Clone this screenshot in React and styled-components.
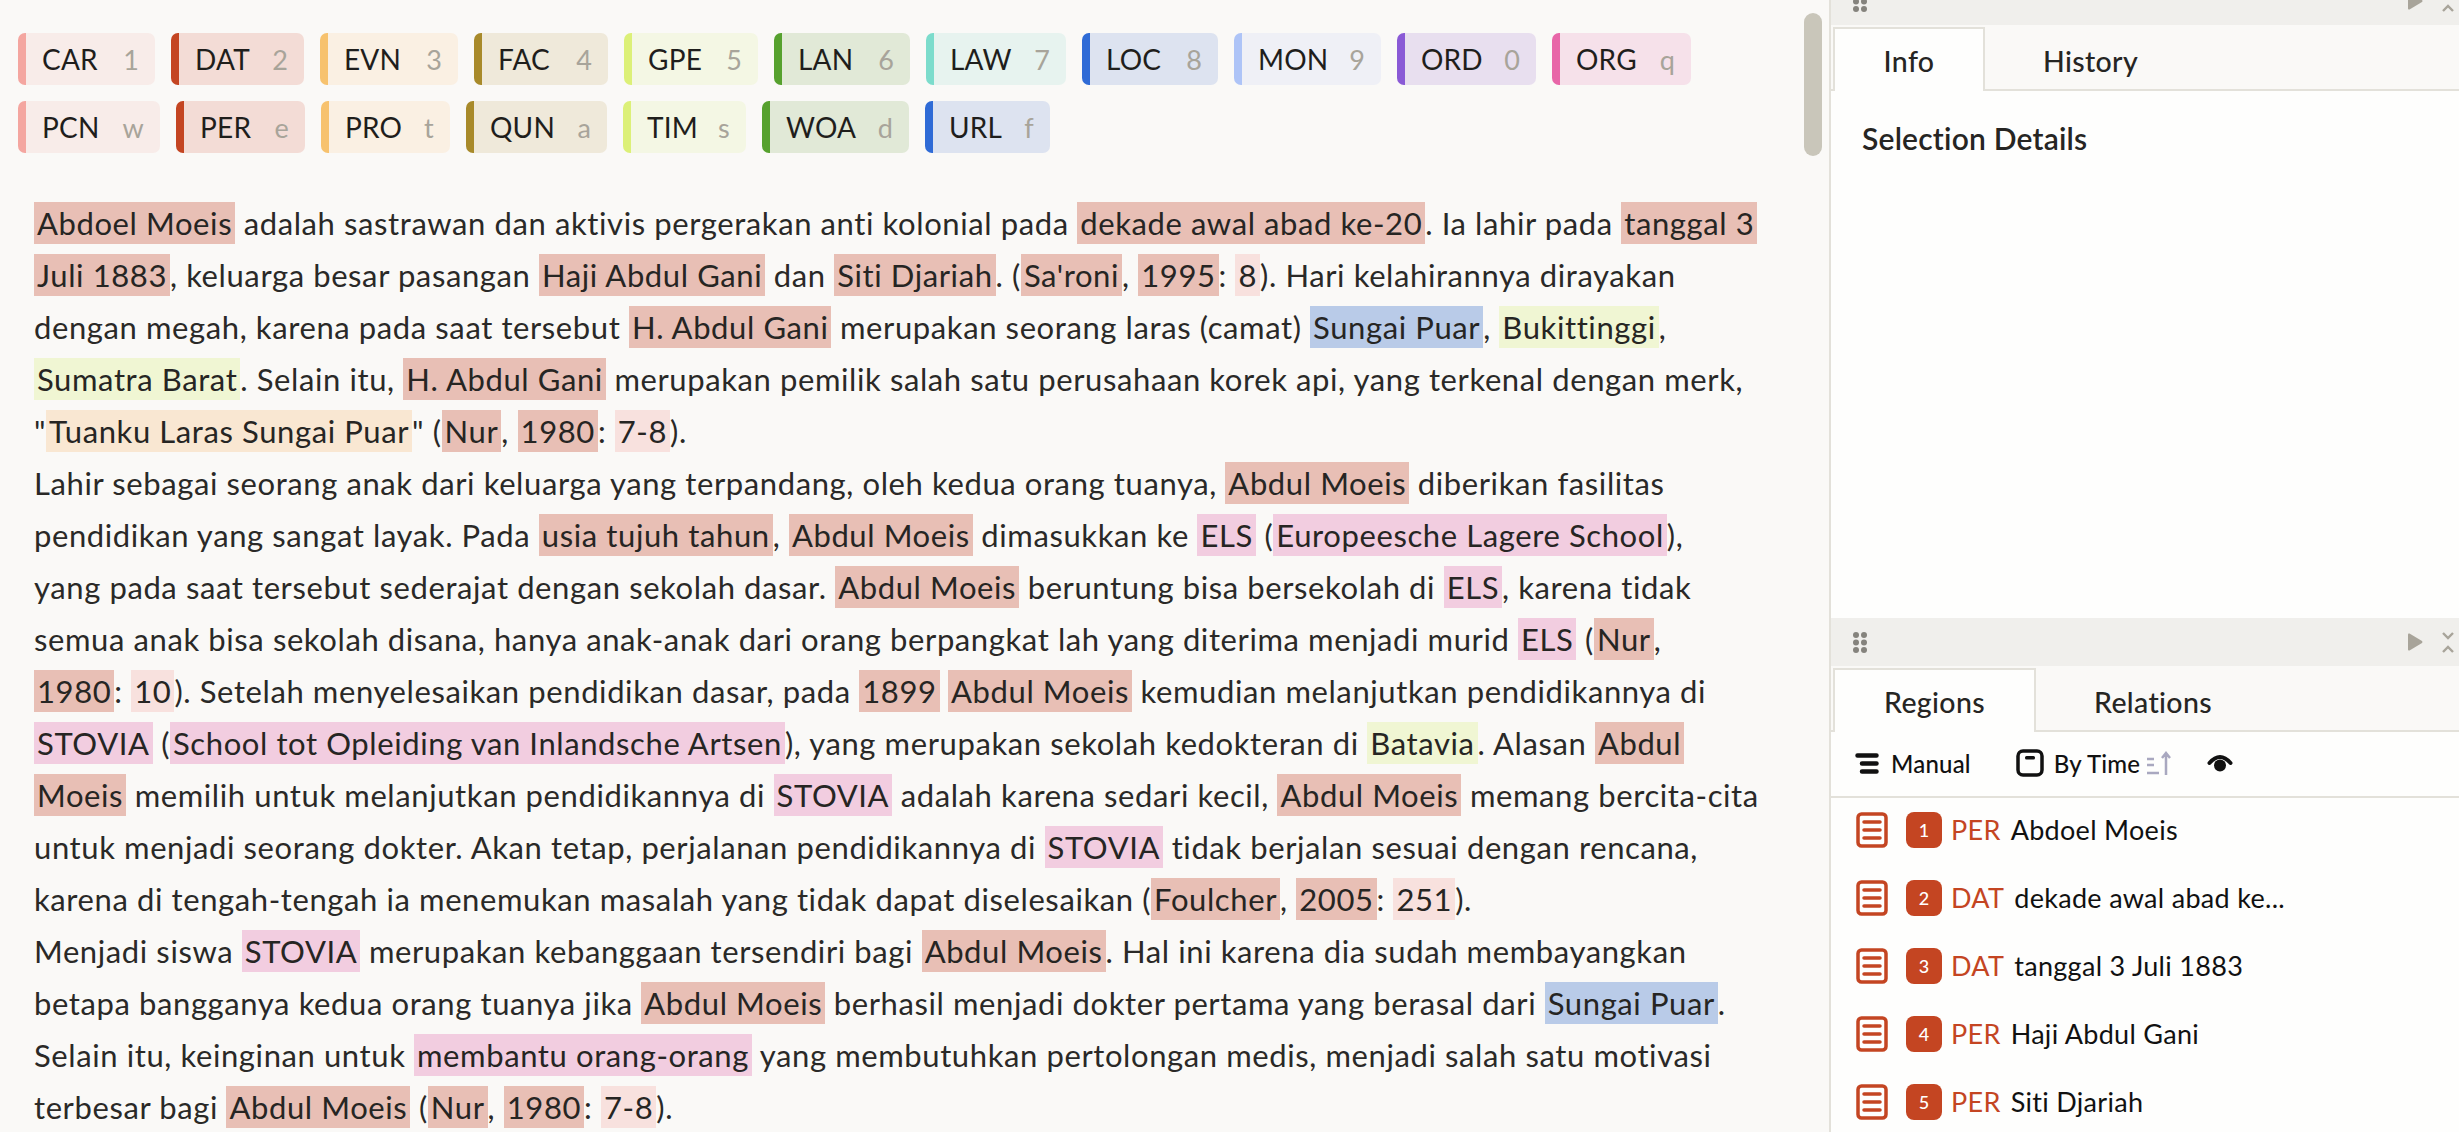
import React from "react";
import styled, { createGlobalStyle } from "styled-components";

const FONT = `Lato, "Noto Sans", sans-serif`;

const Global = createGlobalStyle`
  html, body { margin: 0; padding: 0; height: 100%; overflow: hidden; background: #faf9f7; }
  #root { height: 100%; }
`;

const Page = styled.div`
  display: grid;
  grid-template-columns: 1829px 630px;
  height: 1132px;
  overflow: hidden;
  font-family: ${FONT};
  background: #faf9f7;
`;

const Main = styled.main`
  position: relative;
  overflow: hidden;
  padding: 33px 0 0 18px;
`;

const Thumb = styled.div`
  position: absolute;
  top: 13px;
  right: 7px;
  width: 18px;
  height: 143px;
  border-radius: 9px;
  background: #c9c6ba;
`;

const ChipRow = styled.div`
  display: flex;
  gap: 16px;
  margin-bottom: 16px;
`;

const Chip = styled.div`
  display: flex;
  align-items: center;
  justify-content: space-between;
  box-sizing: border-box;
  height: 52px;
  width: ${(p) => p.$w}px;
  padding: 0 16px 0 16px;
  border-left: 8px solid ${(p) => p.$bar};
  border-radius: 7px;
  background: ${(p) => p.$bg};
  font-size: 28px;
  letter-spacing: 0.2px;
  color: #1f1e1c;
`;

const ChipKey = styled.span`
  color: #a8a49a;
  font-size: 27px;
`;

const Article = styled.article`
  margin: 44px 0 0 16px;
  font-size: 31px;
  line-height: 52px;
  color: #2a2927;
  letter-spacing: 0.6px;
`;

const Line = styled.div`
  height: 52px;
  white-space: nowrap;
`;

const Mark = styled.span`
  display: inline-block;
  height: 42px;
  line-height: 42px;
  padding: 0 3px;
  background: ${(p) => p.$c};
  color: #262523;
`;

const Side = styled.aside`
  display: flex;
  flex-direction: column;
  box-sizing: border-box;
  border-left: 2px solid #e3e1da;
  background: #fefefd;
  overflow: hidden;
  height: 1132px;
`;

const Panel = styled.section`
  flex: none;
  height: ${(p) => p.$h}px;
  margin-top: ${(p) => p.$mt || 0}px;
  overflow: hidden;
`;

const Strip = styled.div`
  display: flex;
  align-items: center;
  justify-content: space-between;
  box-sizing: border-box;
  height: 48px;
  padding: 0 5px 0 22px;
  background: #f0efec;
`;

const StripTools = styled.div`
  display: flex;
  align-items: center;
  gap: 19px;
`;

const TabBar = styled.div`
  display: flex;
  align-items: flex-end;
  box-sizing: border-box;
  height: 66px;
  padding: 2px 0 0 2px;
  background: #faf9f7;
  border-bottom: 2px solid #e3e1da;
`;

const Tab = styled.div`
  box-sizing: border-box;
  height: 64px;
  margin-bottom: -2px;
  width: ${(p) => (p.$w ? `${p.$w}px` : "auto")};
  padding: ${(p) => (p.$active ? "1px 0 0" : "1px 56px 0")};
  display: flex;
  align-items: center;
  justify-content: center;
  font-size: 28.5px;
  font-weight: 500;
  letter-spacing: 0.35px;
  color: #262523;
  background: ${(p) => (p.$active ? "#fefefd" : "transparent")};
  border: 2px solid ${(p) => (p.$active ? "#e3e1da" : "transparent")};
  border-bottom: none;
`;

const Heading = styled.h2`
  margin: 30px 0 0 31px;
  font-size: 30px;
  line-height: 34px;
  font-weight: 600;
  letter-spacing: 0.2px;
  color: #262523;
`;

const Toolbar = styled.div`
  display: flex;
  align-items: center;
  box-sizing: border-box;
  height: 66px;
  padding: 0 0 2px 24px;
  border-bottom: 2px solid #e3e1da;
  font-size: 24px;
  font-weight: 500;
  letter-spacing: 0.2px;
  color: #111;
`;

const ToolItem = styled.div`
  display: flex;
  align-items: center;
  gap: ${(p) => p.$gap ?? 12}px;
  margin-right: ${(p) => p.$mr ?? 0}px;
`;

const List = styled.div`
  display: flex;
  flex-direction: column;
  gap: 32px;
  padding: 14px 0 0 25px;
`;

const Row = styled.div`
  display: flex;
  align-items: center;
  height: 36px;
  font-size: 27px;
  letter-spacing: 0.3px;
  color: #111;
`;

const Badge = styled.span`
  display: flex;
  align-items: center;
  justify-content: center;
  width: 36px;
  height: 36px;
  margin: 0 9px 0 18px;
  border-radius: 8px;
  background: #c44522;
  color: #fff;
  font-size: 18px;
  font-weight: 500;
`;

const RowLabel = styled.span`
  color: #c44522;
  margin: -2px 10px 0 0;
`;

const RowText = styled.span`
  margin-top: -2px;
`;

const COLORS = {
  car: ["#f4a6a0", "#f8ece9"],
  dat: ["#c44522", "#f3dcd6"],
  evn: ["#f7c26e", "#faf0e3"],
  fac: ["#a88a2a", "#efe9da"],
  gpe: ["#dcf078", "#f4f7e4"],
  lan: ["#56a12e", "#e1e9d7"],
  law: ["#7cdccc", "#e7f3ef"],
  loc: ["#2f6bd6", "#dde3f0"],
  mon: ["#aec4f7", "#eff0f6"],
  ord: ["#8a5ad6", "#e8dfef"],
  org: ["#e866a8", "#f6e1ea"],
};

const ROW1 = [
  ["CAR", "1", "car", 137],
  ["DAT", "2", "dat", 133],
  ["EVN", "3", "evn", 138],
  ["FAC", "4", "fac", 134],
  ["GPE", "5", "gpe", 134],
  ["LAN", "6", "lan", 136],
  ["LAW", "7", "law", 140],
  ["LOC", "8", "loc", 136],
  ["MON", "9", "mon", 147],
  ["ORD", "0", "ord", 139],
  ["ORG", "q", "org", 139],
];
const ROW2 = [
  ["PCN", "w", "car", 142],
  ["PER", "e", "dat", 129],
  ["PRO", "t", "evn", 129],
  ["QUN", "a", "fac", 141],
  ["TIM", "s", "gpe", 123],
  ["WOA", "d", "lan", 147],
  ["URL", "f", "loc", 125],
];

const HL = {
  p: "#e8bfb5",
  l: "#f8e1de",
  b: "#b9cbe8",
  g: "#f0f6d3",
  r: "#f9e7d2",
  o: "#f2cde0",
};

const TEXT = [
  "[p:Abdoel Moeis] adalah sastrawan dan aktivis pergerakan anti kolonial pada [p:dekade awal abad ke-20]. Ia lahir pada [p:tanggal 3]",
  "[p:Juli 1883], keluarga besar pasangan [p:Haji Abdul Gani] dan [p:Siti Djariah]. ([p:Sa'roni], [p:1995]: [l:8]). Hari kelahirannya dirayakan",
  "dengan megah, karena pada saat tersebut [p:H. Abdul Gani] merupakan seorang laras (camat) [b:Sungai Puar], [g:Bukittinggi],",
  "[g:Sumatra Barat]. Selain itu, [p:H. Abdul Gani] merupakan pemilik salah satu perusahaan korek api, yang terkenal dengan merk,",
  "\"[r:Tuanku Laras Sungai Puar]\" ([p:Nur], [p:1980]: [l:7-8]).",
  "Lahir sebagai seorang anak dari keluarga yang terpandang, oleh kedua orang tuanya, [p:Abdul Moeis] diberikan fasilitas",
  "pendidikan yang sangat layak. Pada [p:usia tujuh tahun], [p:Abdul Moeis] dimasukkan ke [o:ELS] ([o:Europeesche Lagere School]),",
  "yang pada saat tersebut sederajat dengan sekolah dasar. [p:Abdul Moeis] beruntung bisa bersekolah di [o:ELS], karena tidak",
  "semua anak bisa sekolah disana, hanya anak-anak dari orang berpangkat lah yang diterima menjadi murid [o:ELS] ([p:Nur],",
  "[p:1980]: [l:10]). Setelah menyelesaikan pendidikan dasar, pada [p:1899] [p:Abdul Moeis] kemudian melanjutkan pendidikannya di",
  "[o:STOVIA] ([o:School tot Opleiding van Inlandsche Artsen]), yang merupakan sekolah kedokteran di [g:Batavia]. Alasan [p:Abdul]",
  "[p:Moeis] memilih untuk melanjutkan pendidikannya di [o:STOVIA] adalah karena sedari kecil, [p:Abdul Moeis] memang bercita-cita",
  "untuk menjadi seorang dokter. Akan tetap, perjalanan pendidikannya di [o:STOVIA] tidak berjalan sesuai dengan rencana,",
  "karena di tengah-tengah ia menemukan masalah yang tidak dapat diselesaikan ([p:Foulcher], [p:2005]: [l:251]).",
  "Menjadi siswa [o:STOVIA] merupakan kebanggaan tersendiri bagi [p:Abdul Moeis]. Hal ini karena dia sudah membayangkan",
  "betapa bangganya kedua orang tuanya jika [p:Abdul Moeis] berhasil menjadi dokter pertama yang berasal dari [b:Sungai Puar].",
  "Selain itu, keinginan untuk [o:membantu orang-orang] yang membutuhkan pertolongan medis, menjadi salah satu motivasi",
  "terbesar bagi [p:Abdul Moeis] ([p:Nur], [p:1980]: [l:7-8]).",
];

const REGIONS = [
  ["1", "PER", "Abdoel Moeis"],
  ["2", "DAT", "dekade awal abad ke..."],
  ["3", "DAT", "tanggal 3 Juli 1883"],
  ["4", "PER", "Haji Abdul Gani"],
  ["5", "PER", "Siti Djariah"],
];

function renderLine(s) {
  const out = [];
  const re = /\[(\w):([^\]]*)\]/g;
  let last = 0;
  let m;
  let k = 0;
  while ((m = re.exec(s))) {
    if (m.index > last) out.push(s.slice(last, m.index));
    out.push(
      <Mark key={k++} $c={HL[m[1]]}>
        {m[2]}
      </Mark>
    );
    last = m.index + m[0].length;
  }
  if (last < s.length) out.push(s.slice(last));
  return out;
}

const Grip = () => (
  <svg width="14" height="21" viewBox="0 0 14 21" fill="#85837d">
    {[3, 10.5, 18].map((y) => (
      <g key={y}>
        <circle cx="3" cy={y} r="3" />
        <circle cx="11" cy={y} r="3" />
      </g>
    ))}
  </svg>
);

const Play = () => (
  <svg width="15" height="18" viewBox="0 0 15 18" fill="#a8a49a">
    <path d="M0 1.5Q0 0 1.5 .6L14 8Q15 9 14 10L1.5 17.4Q0 18 0 16.5Z" />
  </svg>
);

const Collapse = () => (
  <svg width="12" height="21" viewBox="0 0 12 21" fill="none" stroke="#a8a49a" strokeWidth="2.4">
    <path d="M1 1l5 5 5-5M1 20l5-5 5 5" />
  </svg>
);

const StripBar = () => (
  <Strip>
    <Grip />
    <StripTools>
      <Play />
      <Collapse />
    </StripTools>
  </Strip>
);

const ManualIcon = () => (
  <svg width="24" height="21" viewBox="0 0 24 21" fill="none" stroke="#111" strokeWidth="4.500" strokeLinecap="round">
    <path d="M2.500 2.500h19M7 10.500h14.500M7 18.500h14.500" />
  </svg>
);

const TimeIcon = () => (
  <svg width="28" height="28" viewBox="0 0 28 28" fill="none">
    <rect x="2" y="2" width="24" height="24" rx="5" stroke="#111" strokeWidth="3.500" />
    <rect x="9" y="7" width="10" height="3.500" rx="1.500" fill="#111" />
  </svg>
);

const SortIcon = () => (
  <svg width="26" height="24" viewBox="0 0 26 24" fill="none" stroke="#a9a8c0" strokeWidth="2.500">
    <path d="M1 8h7M1 14h7M1 22h12M20 24V3M16 7l4-5 4 5" />
  </svg>
);

const EyeIcon = () => (
  <svg width="26" height="18" viewBox="0 0 26 18" fill="none">
    <path d="M2.500 9Q13 -3 23.500 9" stroke="#111" strokeWidth="4" strokeLinecap="round" />
    <circle cx="13" cy="11.500" r="6" fill="#111" />
  </svg>
);

const DocIcon = () => (
  <svg width="32" height="36" viewBox="0 0 32 36" fill="none" stroke="#c44522">
    <rect x="2" y="2" width="28" height="32" rx="3.500" strokeWidth="3.500" />
    <path d="M8 10h16M8 18h16M8 26h16" strokeWidth="3.500" strokeLinecap="round" />
  </svg>
);

const ChipSet = ({ items }) => (
  <ChipRow>
    {items.map(([name, key, color, w]) => (
      <Chip key={name} $w={w} $bar={COLORS[color][0]} $bg={COLORS[color][1]}>
        <span>{name}</span>
        <ChipKey>{key}</ChipKey>
      </Chip>
    ))}
  </ChipRow>
);

export default function App() {
  return (
    <>
      <Global />
      <Page>
        <Main>
          <ChipSet items={ROW1} />
          <ChipSet items={ROW2} />
          <Article>
            {TEXT.map((s, i) => (
              <Line key={i}>{renderLine(s)}</Line>
            ))}
          </Article>
          <Thumb />
        </Main>
        <Side>
          <Panel $h={641} $mt={-23}>
            <StripBar />
            <TabBar>
              <Tab $active $w={152}>Info</Tab>
              <Tab>History</Tab>
            </TabBar>
            <Heading>Selection Details</Heading>
          </Panel>
          <Panel $h={514}>
            <StripBar />
            <TabBar>
              <Tab $active $w={203}>Regions</Tab>
              <Tab>Relations</Tab>
            </TabBar>
            <Toolbar>
              <ToolItem $mr={45}>
                <ManualIcon />
                Manual
              </ToolItem>
              <ToolItem $gap={10} $mr={6}>
                <TimeIcon />
                By Time
              </ToolItem>
              <ToolItem $mr={35}>
                <SortIcon />
              </ToolItem>
              <ToolItem>
                <EyeIcon />
              </ToolItem>
            </Toolbar>
            <List>
              {REGIONS.map(([n, label, text]) => (
                <Row key={n}>
                  <DocIcon />
                  <Badge>{n}</Badge>
                  <RowLabel>{label}</RowLabel>
                  <RowText>{text}</RowText>
                </Row>
              ))}
            </List>
          </Panel>
        </Side>
      </Page>
    </>
  );
}
